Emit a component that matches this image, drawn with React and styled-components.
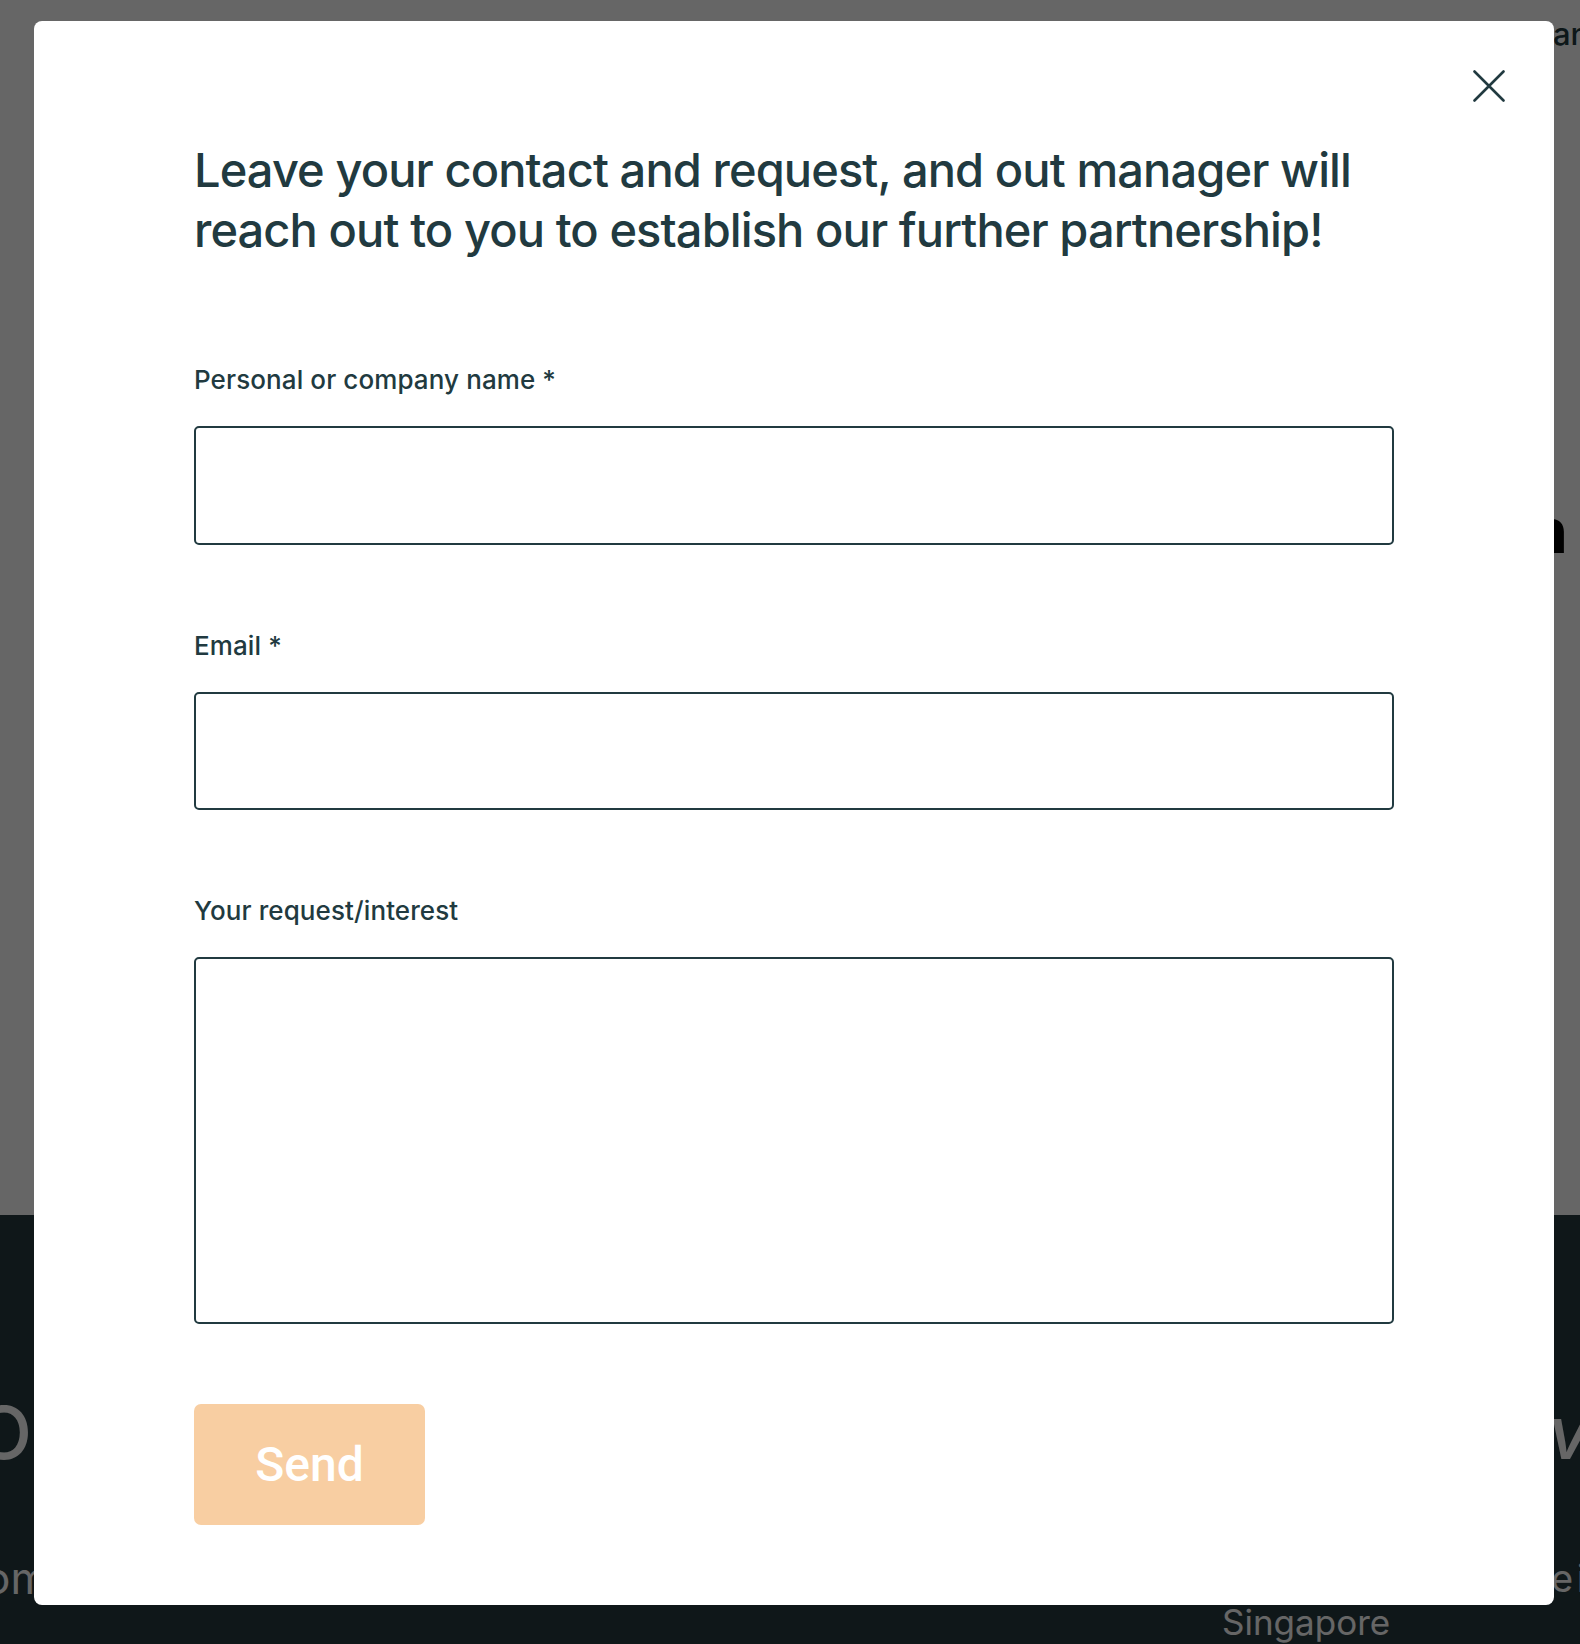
import React from 'react';
import styled, {createGlobalStyle} from 'styled-components';

const Ink = '#213a40';
const Peach = '#f8cea2';

const GlobalStyle = createGlobalStyle`
  html, body {
    margin: 0;
    padding: 0;
  }
  body {
    font-family: Inter, 'Noto Sans', sans-serif;
    color: ${Ink};
  }
  * {
    box-sizing: border-box;
  }
`;

const App = () => {
  return (
    <Page>
      <GlobalStyle />
      <Hero>
        <NavLink>an</NavLink>
        <HeroHeading>n</HeroHeading>
      </Hero>
      <Footer>
        <FooterRow>
          <BigLeft>O</BigLeft>
          <EdgeRight>
            <BigText>vo</BigText>
          </EdgeRight>
        </FooterRow>
        <FooterRow $top={80}>
          <SmallLeft>om</SmallLeft>
          <EdgeRight>
            <SmallText>e i</SmallText>
          </EdgeRight>
        </FooterRow>
        <City>Singapore</City>
      </Footer>

      <Overlay />

      <Modal role="dialog" aria-modal="true">
        <CloseButton aria-label="Close">
          <svg width="32" height="32" viewBox="0 0 32 32" fill="none">
            <path d="M1.5 1.5L30.5 30.5M30.5 1.5L1.5 30.5" stroke={Ink} strokeWidth="2.6" strokeLinecap="round" />
          </svg>
        </CloseButton>

        <Title>
          Leave your contact and request, and out manager will reach out to you to establish our further
          partnership!
        </Title>

        <Form onSubmit={(e) => e.preventDefault()}>
          <Field>
            <Label htmlFor="name">Personal or company name *</Label>
            <Input id="name" type="text" />
          </Field>
          <Field>
            <Label htmlFor="email">Email *</Label>
            <Input id="email" type="email" />
          </Field>
          <Field>
            <Label htmlFor="request">Your request/interest</Label>
            <TextArea id="request" />
          </Field>
          <SendButton type="submit">Send</SendButton>
        </Form>
      </Modal>
    </Page>
  );
};

const Page = styled.div`
  position: relative;
  width: 1580px;
  height: 1644px;
  overflow: hidden;
  background: #ffffff;
`;

const Hero = styled.section`
  height: 1215px;
  padding: 14px 0 0 1553px;
  background: #ffffff;
  display: flex;
  flex-direction: column;
`;

const NavLink = styled.span`
  font-size: 31px;
  font-weight: 500;
  line-height: 40px;
  color: ${Ink};
  white-space: nowrap;
`;

const HeroHeading = styled.h2`
  margin: 437px 0 0 -25px;
  font-size: 62px;
  font-weight: 800;
  line-height: 80px;
  color: #000;
  white-space: nowrap;
`;

const Footer = styled.footer`
  height: 429px;
  padding-top: 178px;
  background: #263a3f;
  color: #ffffff;
`;

const FooterRow = styled.div`
  display: flex;
  justify-content: space-between;
  margin-top: ${(p) => p.$top || 0}px;
  white-space: nowrap;
`;

const BigLeft = styled.span`
  margin-left: -24px;
  font-size: 73px;
  font-weight: 500;
  line-height: 80px;
`;

const EdgeRight = styled.div`
  width: 28px;
  flex-shrink: 0;
`;

const BigText = styled.span`
  display: block;
  margin-left: -4px;
  font-size: 73px;
  font-weight: 500;
  line-height: 80px;
  font-style: italic;
`;

const SmallLeft = styled.span`
  margin-left: -16px;
  font-size: 44px;
  line-height: 50px;
`;

const SmallText = styled.span`
  display: block;
  margin-left: -1px;
  font-size: 38px;
  line-height: 50px;
  word-spacing: -7px;
`;

const City = styled.div`
  margin: -3px 0 0 1222px;
  font-size: 35px;
  line-height: 44px;
  white-space: nowrap;
`;

const Overlay = styled.div`
  position: absolute;
  inset: 0;
  background: rgba(0, 0, 0, 0.6);
`;

const Modal = styled.div`
  position: absolute;
  top: 21px;
  left: 34px;
  width: 1520px;
  padding: 119px 160px 80px;
  background: #ffffff;
  border-radius: 8px;
`;

const CloseButton = styled.button`
  position: absolute;
  top: 49px;
  right: 49px;
  width: 32px;
  height: 32px;
  padding: 0;
  border: none;
  background: none;
  cursor: pointer;
  svg {
    display: block;
  }
`;

const Title = styled.h1`
  margin: 0;
  max-width: 1190px;
  font-size: 47px;
  font-weight: 500;
  line-height: 60px;
  letter-spacing: -0.9px;
  color: ${Ink};
`;

const Form = styled.form`
  display: flex;
  flex-direction: column;
  gap: 85px;
  margin-top: 104px;
`;

const Field = styled.div`
  display: flex;
  flex-direction: column;
  gap: 30px;
`;

const Label = styled.label`
  font-size: 26px;
  font-weight: 500;
  line-height: 32px;
  letter-spacing: 0.1px;
  color: ${Ink};
`;

const Input = styled.input`
  width: 100%;
  height: 118.5px;
  padding: 0 24px;
  border: 2px solid ${Ink};
  border-radius: 5px;
  background: #ffffff;
  font-family: inherit;
  font-size: 26px;
  color: ${Ink};
  outline: none;
`;

const TextArea = styled.textarea`
  width: 100%;
  height: 367px;
  padding: 20px 24px;
  border: 2px solid ${Ink};
  border-radius: 5px;
  background: #ffffff;
  font-family: inherit;
  font-size: 26px;
  color: ${Ink};
  resize: none;
  outline: none;
`;

const SendButton = styled.button`
  align-self: flex-start;
  width: 231px;
  height: 121px;
  margin-top: -5px;
  border: none;
  border-radius: 7px;
  background: ${Peach};
  color: #ffffff;
  font-family: Roboto, 'Liberation Sans', sans-serif;
  font-size: 48px;
  font-weight: 500;
  cursor: pointer;
`;

export default App;
